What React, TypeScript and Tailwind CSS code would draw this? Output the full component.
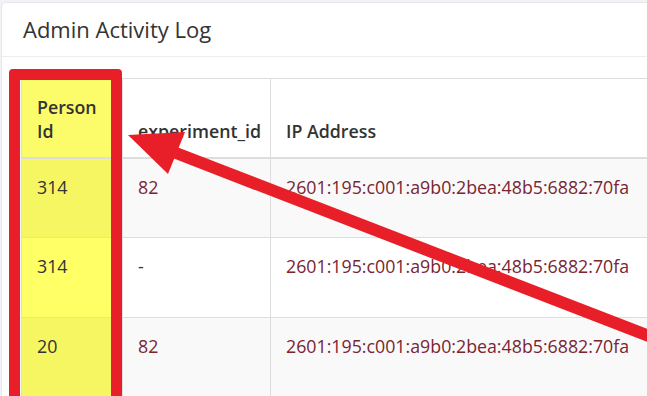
import React from "react";

const rows = [
  { pid: "314", exp: "82", ip: "2601:195:c001:a9b0:2bea:48b5:6882:70fa", striped: true },
  { pid: "314", exp: "-", ip: "2601:195:c001:a9b0:2bea:48b5:6882:70fa", striped: false },
  { pid: "20", exp: "82", ip: "2601:195:c001:a9b0:2bea:48b5:6882:70fa", striped: true },
];

export default function App() {
  return (
    <div className="relative w-[647px] h-[396px] overflow-hidden bg-[#f2f3f7] font-['Open_Sans',sans-serif]">
      <div className="ml-[1px] mt-[2px] w-[1100px] bg-white border border-[#e6e7ea] rounded-[4px]">
        <div className="h-[54px] pl-[21px] flex items-center border-b border-[#eeeeee] text-[22px] text-[#333333]">
          Admin Activity Log
        </div>
        <div className="pl-[19px] pt-[21px] pb-[20px]">
          <table className="table-fixed w-[890px] border-collapse text-[17.8px] leading-[24px] text-[#333333]">
            <colgroup>
              <col className="w-[101px]" />
              <col className="w-[148px]" />
              <col className="w-[440px]" />
              <col className="w-[201px]" />
            </colgroup>
            <thead>
              <tr>
                <th className="h-[79px] align-bottom text-left font-semibold px-[15px] pt-[15px] pb-[14px] border border-[#dddddd] border-b-2 bg-[#fcfc6b]">
                  Person Id
                </th>
                <th className="align-bottom text-left font-semibold pl-[15px] pr-0 pb-[14px] border border-[#dddddd] border-b-2 whitespace-nowrap">
                  experiment_id
                </th>
                <th className="align-bottom text-left font-semibold px-[15px] pb-[14px] border border-[#dddddd] border-b-2">
                  IP Address
                </th>
                <th className="align-bottom text-left font-semibold px-[15px] pb-[14px] border border-[#dddddd] border-b-2"></th>
              </tr>
            </thead>
            <tbody>
              {rows.map((r, i) => (
                <tr key={i} className={r.striped ? "bg-[#f9f9f9]" : "bg-white"}>
                  <td
                    className={
                      "h-[80px] align-top px-[15px] pt-[16px] border border-[#dddddd] " +
                      (r.striped ? "bg-[#f6f662]" : "bg-[#ffff66]")
                    }
                  >
                    {r.pid}
                  </td>
                  <td className={"align-top px-[15px] pt-[16px] border border-[#dddddd] " + (r.exp === "-" ? "text-[#333333]" : "text-[#7a2532]")}>
                    {r.exp}
                  </td>
                  <td className="align-top px-[15px] pt-[16px] border border-[#dddddd] text-[#7a2532]">{r.ip}</td>
                  <td className="align-top px-[15px] pt-[16px] border border-[#dddddd]"></td>
                </tr>
              ))}
            </tbody>
          </table>
        </div>
      </div>

      <div className="absolute left-[9px] top-[69px] w-[113px] h-[360px] border-[11px] border-[#e81f28] rounded-[4px]" />

      <svg className="absolute left-0 top-0" width="647" height="396" viewBox="0 0 647 396">
        <line x1="176" y1="153" x2="680" y2="348" stroke="#e81f28" strokeWidth="12" />
        <polygon points="128,135 185,132 168,174" fill="#e81f28" />
      </svg>
    </div>
  );
}
